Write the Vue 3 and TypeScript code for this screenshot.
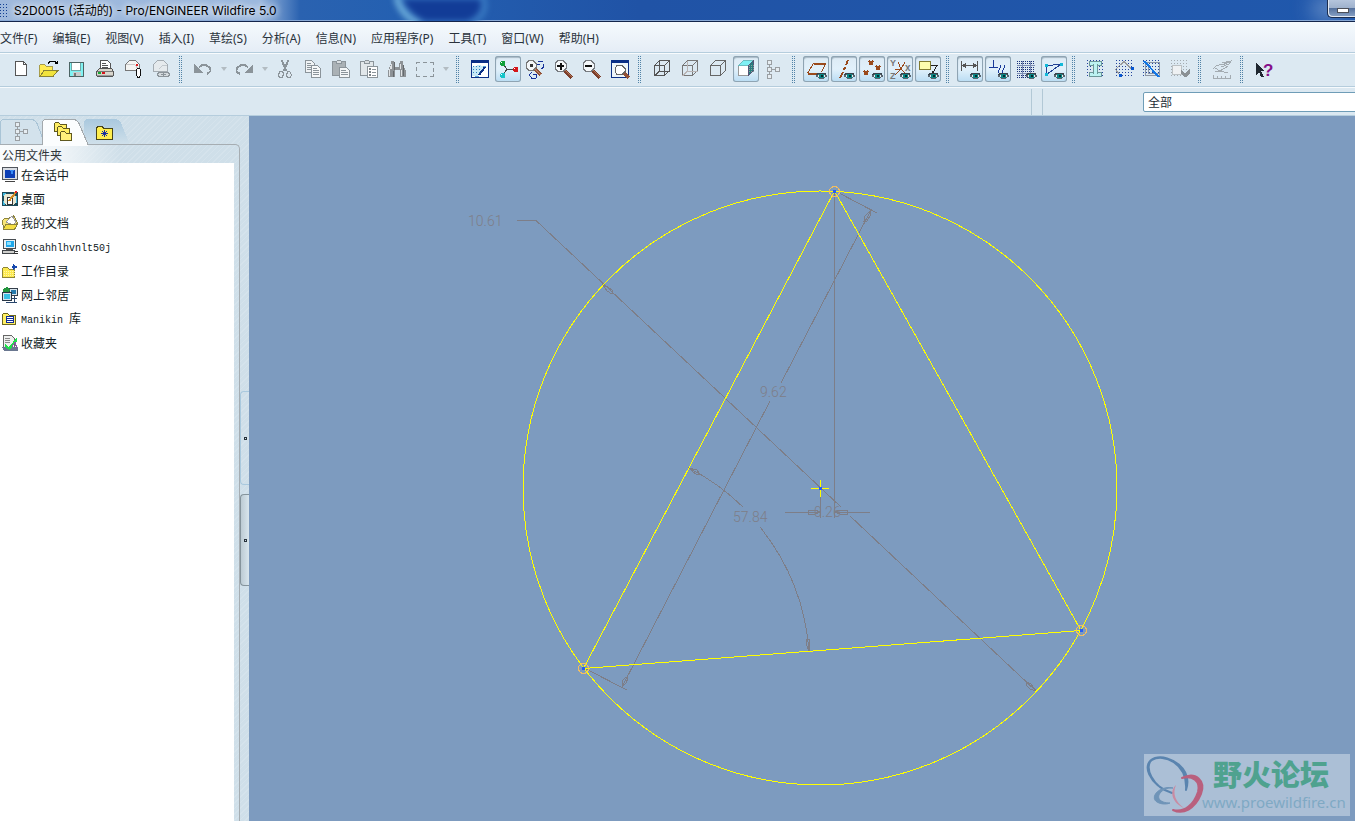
<script setup lang="ts">
import { ref } from 'vue'

interface Shape { d: string; f: string; s: string; w: number }
interface Glyph { x: number; y: number; t: string; c: string; size: number }
interface Tool { id: string; label: string; pressed?: boolean; caret?: boolean }

const p = (d: string, f = 'none', s = 'none', w = 1): Shape => ({ d, f, s, w })

const eye: Shape[] = [
  p('M10.500 17l3-2h5l2 2-3 2h-4z', '#e8f0f0', '#5a656e'),
  p('M13 15h5v4h-5z', '#0a8584'),
  p('M15 16h2v2h-2z', '#042c30'),
  p('M10.500 15.500l2-1h6l2 1', 'none', '#39434c')
]
const dots = (x: number, y: number, w: number, h: number, c: string, gap = 3): Shape => {
  let d = ''
  for (let j = y; j <= y + h; j += gap) for (let i = x; i <= x + w; i += gap) d += `M${i} ${j}h1v1h-1z`
  return p(d, c)
}
const tree = [p('M3.5 1.5h4v4h-4zM3.5 8.5h4v4h-4zM3.5 15.5h4v4h-4zM11.5 8.5h4v4h-4z', '#e6edf2', '#9a9fa3'), p('M5.5 6v2M5.5 13v2M8 10.5h3', 'none', '#9a9fa3')]
const gray = '#8b949a'
const navy = '#0b2f86'
const brown = '#9a4a1c'
const cube = 'M2.5 6.5h10v10h-10zM2.5 6.5l5-5h10l-5 5M17.5 1.5v10l-5 5'
const lens = (mark: string): Shape[] => [
  p('M10 11l8 8', 'none', '#7c3f2c', 3),
  p('M11 11l7 7', 'none', '#b57655', 1),
  p('M4 1.5h5l3 3v5l-3 3H4l-3-3v-5z', '#f5f8fa', '#777b80'),
  p(mark, 'none', '#111', 2)
]

const icons: Record<string, Shape[]> = {
  new: [p('M4.5 2.5h8l3 3v11h-11z', '#fff', '#555'), p('M12.5 2.5v3h3', 'none', '#555')],
  open: [
    p('M.5 17.5v-11l1-1h4l2 2h6v3', '#ffeb52', '#a89d4a'),
    p('M1 17.5l4-6h14l-5 6z', '#f1e33c', '#8a8334'),
    p('M9.5 5v-1l2-2h4l2 2', 'none', '#000'), p('M15 5h4v-4z', '#000')
  ],
  save: [p('M2.5 3.5h14v14h-14z', '#80f3f3', '#4c6464'), p('M5 4h8v7H5z', '#fff'), p('M4.5 4v7h9V4', 'none', '#70a7a7'), p('M6 13h8v4H6z', '#c8cccc'), p('M7 14h2v3H7z', '#777')],
  print: [
    p('M5.5 9.5v-8h7l3 3v6h-10z', '#fff', '#555'), p('M7 4.5h4M7 6.5h6M7 8.5h6', 'none', '#555'),
    p('M1.5 12.5l3-3h12l2 3v4l-1 1h-15l-1-1z', '#d8d5cc', '#555'), p('M2 12.5h16', 'none', '#777'),
    p('M2 16h16v1H2z', '#999'), p('M3 13h3v2H3z', '#14a832'), p('M7 13h3v2H7z', '#d4161b')
  ],
  mail: [
    p('M2.5 11.5v-6l4-4h6l4 4v6z', '#f4f4f2', '#777'), p('M2.5 5.5h9l5 6', 'none', '#c7c7c7'), p('M13 5h2v2h-2z', '#e01b1b'),
    p('M13.5 15v-4l1-2h2l1 2v5l-1 2h-2l-1-2v-5', '#fff', '#111')
  ],
  maillink: [
    p('M2.5 12.5v-7l4-4h6l4 4v7z', '#e5eaed', '#a4acb2'), p('M7.5 10.5l4-4h4', 'none', '#c2c9ce'),
    p('M7.5 13.5h5v4h-5l-1-2zM12.5 13.5h5l1 2-1 2h-5zM10 15.5h5', '#d4dade', '#8b949a')
  ],
  undo: [p('M1 5v9h9z', gray), p('M6 8q5-4 10 0q4 4-2 7', 'none', gray, 2)],
  redo: [p('M19 5v9h-9z', gray), p('M14 8Q9 4 4 8q-4 4 2 7', 'none', gray, 2)],
  cut: [
    p('M6.5 1l5 11M13.5 1l-5 11', 'none', gray, 2), p('M4.5 12.5h3l1 2-1 4h-3l-1-2zM12.5 12.5h2l2 3-1 3h-3l-1-2z', '#dce7ef', gray)
  ],
  copy: [
    p('M2.5 1.5h6l3 3v9h-9z', '#f0f3f5', gray), p('M4 4.5h4M4 6.5h5M4 8.5h5M4 10.5h5', 'none', gray),
    p('M8.5 6.5h6l3 3v9h-9z', '#f6f8f9', gray), p('M10 9.5h4M10 11.5h6M10 13.5h6M10 15.5h6', 'none', gray)
  ],
  paste: [
    p('M1.5 2.5h13v14h-13z', '#aab1b5', gray), p('M5.5 4.5v-2l1-1h3l1 1v2z', '#d8dde0', gray),
    p('M8.5 8.5h7l3 3v7h-10z', '#f3f6f7', gray), p('M10 11.5h5M10 13.5h7M10 15.5h7', 'none', gray)
  ],
  pastesp: [
    p('M1.5 2.5h13v14h-13z', '#e1e7ea', gray), p('M5.5 4.5v-2l1-1h3l1 1v2z', '#d8dde0', gray),
    p('M8.5 7.5h10v11h-10z', '#fff', gray), p('M10 9h2v2h-2zM10 12h2v2h-2zM10 15h2v2h-2z', '#7b8388'), p('M13 10.5h4M13 13.5h4M13 16.5h4', 'none', gray)
  ],
  find: [
    p('M4 2h3v2h1v4h4v-4h1V2h3v3l3 7v6h-6v-7h-5v7H1v-6l3-7z', '#8d9296'), p('M4 5h1v5H3v7H2v-5zM13 5h1v6h1v6h-1v-7h-1z', '#e0e3e5'), p('M7 3v8M16 6v11M6 12v6', 'none', '#666a6d')
  ],
  select: [p('M1.5 5V3.5H5M8 3.5h4M15 3.5h3.500V6M18.500 9v4M18.500 15v2.500H15M12 17.500H8M5 17.500H1.500V15M1.500 12V8', 'none', gray)],
  sketchview: [
    p('M1.5 2.500h17v16h-17z', '#fff', navy), p('M1 1h18v3H1z', navy), p('M2 8l7-2 6 2-7 9H2z', '#c6e7f5'),
    dots(3, 7, 8, 8, '#2d83c0'), p('M9 16l6-8', 'none', navy, 2), p('M5 17h4M13 7l3 1', 'none', '#58a5d4')
  ],
  datum: [
    p('M5 5l4 5h8M9 10l-4 6', 'none', '#444'), p('M3 2h3l1 1v3l-1 1H3L2 6V3z', '#11a03a'), p('M16 8h3l1 1v3l-1 1h-3l-1-1V9z', '#d4161b'), p('M3 14h3l1 1v3l-1 1H3l-1-1v-3z', '#14c4c9'),
    p('M3 3h1v1H3zM16 9h1v1h-1zM3 15h1v1H3z', '#fff')
  ],
  refit: [
    p('M8 9l7 7', 'none', '#925238', 3), p('M9 10l6 6', 'none', '#c08a6c'), p('M3 1.500h4l3 3v4l-3 3H3l-3-3v-4z', '#f3f6f8', '#777'), p('M4 5h3v3H4z', '#333'),
    p('M12 2.500h5M11 5.500h3M17.500 5v3l-2 2M5.500 13l-2 3 2 3h4M7 15.500h3v3', 'none', '#16319a')
  ],
  zoomin: lens('M3 7h7M6.500 4v7'),
  zoomout: lens('M3 7h7'),
  zoomfit: [
    p('M1.500 2.500h17v16h-17z', '#eef5f9', navy), p('M1 1h18v3H1z', navy), p('M13 13l6 6', 'none', '#925238', 3),
    p('M7 6.500h5l3 3v3l-3 3H7l-2-3v-3z', '#fff', '#666')
  ],
  wire: [p(cube, 'none', '#555'), p('M7.500 2v10h10M7.500 12l-5 5', 'none', '#555')],
  hidden: [p(cube, 'none', '#777'), p('M7.500 2v10h10M7.500 12l-5 5', 'none', '#b9b4b4')],
  nohidden: [p(cube, 'none', '#666')],
  shaded: [
    p('M2.500 6.500h10v10h-10z', '#fff', '#999'), p('M2.500 6.500l5-5h10l-5 5z', '#7ef0f4', '#6bbcc0'), p('M12.500 6.500l5-5v10l-5 5z', '#277e7f', '#557'), dots(13, 6, 4, 6, '#8b9a9a', 2)
  ],
  tree,
  plane: [p('M1.500 14.500l6-10h12l-4 9M1.500 14.500h9', 'none', brown, 1), p('M2 15.500h8M8 5.500h11', 'none', brown), ...eye],
  axis: [p('M14 1l-2 5M11 8l-1 3M9 13l-3 6', 'none', brown, 2), ...eye],
  points: [p('M7 2l4 4M11 2l-4 4M2 12l4 4M6 12l-4 4M14 7l4 4M18 7l-4 4', 'none', brown, 2), ...eye],
  csys: [p('M8 3l3 7-6 6M11 10h-6M11 10l4-7M11 10l5 5', 'none', brown), ...eye],
  note: [p('M1.500 2.500h11v8h-11z', '#fdfcae', '#817b31'), p('M13 6.500h6l-5 9M14 12v3h3', 'none', '#222'), ...eye],
  dims: [p('M1.500 2v10M17.500 2v10M2 6.500h15', 'none', '#555'), p('M2 6.500l4-3v6zM17 6.500l-4-3v6z', '#555'), ...eye],
  constr: [p('M5.500 1v8M1 8.500h9M10 14l3-8M14 14l3-8', 'none', '#193a9a'), ...eye],
  grid: [dots(1, 2, 17, 17, '#193078', 2), p('M6.500 2v17M14.500 2v17M1 6.500h18M1 14.500h18', 'none', '#7d8db4'), ...eye],
  vertices: [p('M2.500 6.500l14-1-14 10z', 'none', '#214294'), p('M1 5h3v3H1zM16 4h3v3h-3zM1 14h3v3H1z', '#13b9d8'), ...eye],
  shade: [dots(1, 1, 17, 17, '#24449c'), p('M3.500 2.500h12v4h-3l-1-1v9l1-1h3v4h-12v-4h3l1 1v-9l-1 1h-3z', '#bdf2f2', '#6d9799')],
  openends: [dots(2, 1, 16, 17, '#24449c'), p('M6 16L1.500 10.500 10 2.500l8 8', 'none', '#999'), p('M5 15h3v3H5zM17 8h3v3h-3z', '#0757d0')],
  overlap: [dots(1, 1, 17, 17, '#24449c'), p('M3.500 3.500h14v13M6.500 5v9.500H18M3.500 3.500v13h14', 'none', '#8d96a4'), p('M2 2l15 16', 'none', '#1477e5', 2)],
  req: [dots(1, 1, 17, 17, '#a3abb0'), p('M2.500 6.500h9v9h-9z', '#eef1f3', '#bbc1c4'), p('M11 11l4 4 5-6v5l-4 4h-2l-3-4z', '#8b9195')],
  analyze: [p('M1.500 10q2-5 9-4l8-4M3 9l5 3 8-5M3 13q7-1 13 1M10 4l9-2-2 3-8 3', 'none', '#a3abb1'), p('M1.500 16v3.500h17V16M5.500 17v3M9.500 17v3M13.500 17v3', 'none', '#a3abb1')],
  help: [p('M2 4l8 8H7l3 6H7l-2-5-3 3z', '#202831')],
  session: [p('M.5.5h15v12H.500z', '#d9dde3', '#50555c'), p('M3 2.500h10v8H3z', '#0c3fb6'), p('M8 3h4l-2 5z', '#398cf4'), p('M3 14h10v1H3z', '#444')],
  desktop: [p('M0 1h16v14H0z', '#1d4a58'), p('M1 2h3v3H1zM1 10h2v4H1zM13 5h2v7h-2z', '#43b8de'), p('M3 3h9l2 3v6l-3 2H4l-2-2V6z', '#e7e7d2'), p('M5.500 6v7h5V6z', '#fff', '#333'), p('M7 10l7-9', 'none', '#d08a22', 2), p('M13 0h2v2h-2z', '#e32222')],
  docs: [p('M1.500 14.500l-1-9 2-2h4l5-3 4 7-3 6z', '#f8e678', '#8d843c'), p('M4 7l6-6 4 6-3 3z', '#fff', '#999'), p('M1.500 14.500l2-5h12l-3 5z', '#f4de43', '#8d843c')],
  computer: [p('M1.500.5h12v9h-12z', '#e9f0f4', '#474d52'), p('M4 2h8v6H4z', '#20a8eb'), p('M5 3h4v3H5z', '#8be1ff'), p('M4 10h7v1H4z', '#555'), p('M.5 11.500h12v3H.5z', '#cfcfcc', '#404448'), p('M11 14.500h5M13 12.500h3', 'none', '#333')],
  work: [p('M.5 14.500v-9l1-1h4l2 2h5v8z', '#fce94f', '#8d8538'), dots(2, 8, 10, 5, '#fff6a8', 2), p('M12 0l1 3 3 1-3 1-1 3-1-3-3-1 3-1z', '#1648ae')],
  network: [p('M7.500 1.500h8v7h-8z', '#d9e6ee', '#353f4b'), p('M1 2l4-2 3 3-2 2H1z', '#23953e'), p('M9 3h5v4H9z', '#267bae'), p('M.5 5.500h9v8h-9z', '#d7e5ed', '#293746'), p('M2 7h6v5H2z', '#39c1e4'), p('M10 11.500h5M4 15.500h11M12.500 9v6', 'none', '#28456b')],
  library: [p('M.5 13.500v-10l1-1h4l2 2h6v9z', '#fff063', '#6e671e'), p('M4 5h8v7H4z', '#102c96'), p('M5 6.500h6M5 8.500h6M5 10.500h6', 'none', '#fff')],
  favs: [p('M1.500.5h8l3 3v9h-11z', '#eef0ee', '#666'), p('M3 3.500h5M3 5.500h5M3 7.500h5', 'none', '#888'), p('M0 12h16v4H2z', '#6a7790'), p('M3 9l4 3 8-10v4l-7 9-5-3z', '#1ee04a'), p('M10 12l3-5 2 7', 'none', '#8854a4')]
}

const glyphs: Record<string, Glyph[]> = {
  help: [{ x: 9, y: 17, t: '?', c: '#86108a', size: 17 }],
  csys: [{ x: 0, y: 7, t: 'Y', c: '#777', size: 9 }, { x: 0, y: 20, t: 'Z', c: '#777', size: 9 }, { x: 15, y: 12, t: 'x', c: '#777', size: 10 }]
}

const tools: Tool[][] = [
  [
    { id: 'new', label: '新建' }, { id: 'open', label: '打开' }, { id: 'save', label: '保存' },
    { id: 'print', label: '打印' }, { id: 'mail', label: '发送邮件' }, { id: 'maillink', label: '发送链接' }
  ],
  [
    { id: 'undo', label: '撤消', caret: true }, { id: 'redo', label: '重做', caret: true }, { id: 'cut', label: '剪切' },
    { id: 'copy', label: '复制' }, { id: 'paste', label: '粘贴' }, { id: 'pastesp', label: '选择性粘贴' },
    { id: 'find', label: '查找' }, { id: 'select', label: '选取', caret: true }
  ],
  [
    { id: 'sketchview', label: '草绘视图' }, { id: 'datum', label: '旋转中心', pressed: true }, { id: 'refit', label: '定向模式' },
    { id: 'zoomin', label: '放大' }, { id: 'zoomout', label: '缩小' }, { id: 'zoomfit', label: '重新调整' }
  ],
  [
    { id: 'wire', label: '线框' }, { id: 'hidden', label: '隐藏线' }, { id: 'nohidden', label: '消隐' },
    { id: 'shaded', label: '着色', pressed: true }, { id: 'tree', label: '模型树' }
  ],
  [
    { id: 'plane', label: '基准平面', pressed: true }, { id: 'axis', label: '基准轴', pressed: true }, { id: 'points', label: '基准点', pressed: true },
    { id: 'csys', label: '坐标系', pressed: true }, { id: 'note', label: '注释', pressed: true }
  ],
  [
    { id: 'dims', label: '显示尺寸', pressed: true }, { id: 'constr', label: '显示约束', pressed: true },
    { id: 'grid', label: '显示网格' }, { id: 'vertices', label: '显示顶点', pressed: true }
  ],
  [
    { id: 'shade', label: '着色封闭环' }, { id: 'openends', label: '加亮开放端点' }, { id: 'overlap', label: '重叠几何' }, { id: 'req', label: '特征要求' }
  ],
  [{ id: 'analyze', label: '分析' }],
  [{ id: 'help', label: '上下文帮助' }]
]

const menus = ['文件(F)', '编辑(E)', '视图(V)', '插入(I)', '草绘(S)', '分析(A)', '信息(N)', '应用程序(P)', '工具(T)', '窗口(W)', '帮助(H)']

const places = [
  { id: 'session', latin: '', text: '在会话中' },
  { id: 'desktop', latin: '', text: '桌面' },
  { id: 'docs', latin: '', text: '我的文档' },
  { id: 'computer', latin: 'Oscahhlhvnlt50j', text: '' },
  { id: 'work', latin: '', text: '工作目录' },
  { id: 'network', latin: '', text: '网上邻居' },
  { id: 'library', latin: 'Manikin ', text: '库' },
  { id: 'favs', latin: '', text: '收藏夹' }
]

const filter = ref('全部')
const vertices = [[834, 191], [583, 668], [1081, 630]]
const dimTexts = [
  { x: 468, y: 226, t: '10.61' },
  { x: 760, y: 397, t: '9.62' },
  { x: 733, y: 522, t: '57.84' },
  { x: 814, y: 517, t: '0.26' }
]
</script>

<template>
  <div class="app">
    <header class="title">
      <svg class="swirl" viewBox="0 0 120 21" aria-hidden="true">
        <path d="M8-4Q14 14 34 24h44Q100 14 92-4z" fill="#123c97" stroke="#3f83c9" stroke-width="5" />
        <path d="M6-4Q10 16 30 24" fill="none" stroke="#86c6e6" stroke-width="4" />
      </svg>
      <span class="grip"></span>
      <h1>S2D0015 (活动的) - Pro/ENGINEER Wildfire 5.0</h1>
      <button class="min" aria-label="最小化"><span></span></button>
    </header>

    <nav class="menu">
      <button v-for="m in menus" :key="m">{{ m }}</button>
    </nav>

    <div class="tools" role="toolbar" aria-label="工具栏">
      <div v-for="(g, i) in tools" :key="i" class="group">
        <template v-for="t in g" :key="t.id">
          <button class="tool" :class="{ pressed: t.pressed }" :aria-label="t.label" :aria-pressed="!!t.pressed">
            <svg viewBox="0 0 20 20" width="20" height="20">
              <path v-for="(s, k) in icons[t.id]" :key="k" :d="s.d" :fill="s.f" :stroke="s.s" :stroke-width="s.w" />
              <text v-for="l in glyphs[t.id] || []" :key="l.t" :x="l.x" :y="l.y" :fill="l.c" :font-size="l.size">{{ l.t }}</text>
            </svg>
          </button>
          <button v-if="t.caret" class="caret" :aria-label="t.label + '选项'"></button>
        </template>
      </div>
    </div>

    <div class="filterbar">
      <span class="spacer"></span>
      <div class="filter">
        <select v-model="filter" aria-label="过滤器"><option>全部</option><option>几何</option><option>尺寸</option></select>
      </div>
    </div>

    <main class="work">
      <aside class="side">
        <div class="panel">
          <div class="tabs" role="tablist">
            <button role="tab" class="tab first" aria-label="模型树" aria-selected="false">
              <svg viewBox="0 0 44 26" width="44" height="26">
                <path d="M.5 26V4Q.5.5 4 .5h27q4 0 6 4l8 21" fill="#d3e2ec" stroke="#a9c4d6" />
                <g transform="translate(12 2)"><path v-for="(s, k) in tree" :key="k" :d="s.d" :fill="s.f" :stroke="s.s" /></g>
              </svg>
            </button>
            <button role="tab" class="tab active" aria-label="文件夹浏览器" aria-selected="true">
              <svg viewBox="0 0 44 26" width="44" height="26">
                <path d="M.5 27V4Q.5.5 4 .5h27q4 0 6 4l9 21v2z" fill="#fbfdfe" />
                <path d="M.5 26V4Q.5.5 4 .5h27q4 0 6 4l9 21" fill="none" stroke="#a3a9ad" />
                <path d="M12.500 12.500v-8l1-1h3l2 2h6v7z" fill="#ffee62" stroke="#5f5920" />
                <path d="M15.500 16.500v-8l1-1h3l2 2h6v7z" fill="#ffee62" stroke="#5f5920" />
                <path d="M18.500 21.500v-8l1-1h3l2 2h5v7z" fill="#fff07a" stroke="#5f5920" />
              </svg>
            </button>
            <button role="tab" class="tab" aria-label="收藏夹" aria-selected="false">
              <svg viewBox="0 0 44 26" width="44" height="26">
                <path d="M0 26V4Q0 0 4 0h27q4 0 6 4l9 22z" fill="url(#tabFade)" />
                <defs><linearGradient id="tabFade" x2="0" y2="1"><stop stop-color="#a9c8de" /><stop offset="1" stop-color="#d1e1eb" /></linearGradient></defs>
                <path d="M12.500 20.500v-11l1-2h5l1 2h9v11z" fill="#ffee4e" stroke="#494517" />
                <path d="M20.500 11v7M17 14.500h7M18 12l5 5M23 12l-5 5" stroke="#172fa0" />
              </svg>
            </button>
          </div>
          <section class="browser">
            <h2>公用文件夹</h2>
            <ul>
              <li v-for="r in places" :key="r.id">
                <button>
                  <svg viewBox="0 0 16 16" width="16" height="16">
                    <path v-for="(s, k) in icons[r.id]" :key="k" :d="s.d" :fill="s.f" :stroke="s.s" :stroke-width="s.w" />
                  </svg>
                  <span><span v-if="r.latin" class="latin">{{ r.latin }}</span>{{ r.text }}</span>
                </button>
              </li>
            </ul>
          </section>
        </div>
        <div class="sashes">
          <button class="sash light" aria-label="展开导航区"></button>
          <button class="sash" aria-label="收起导航区"></button>
        </div>
      </aside>

      <section class="canvas" aria-label="草绘区">
        <svg class="sketch" viewBox="249 116 1106 705" preserveAspectRatio="xMinYMin meet">
          <g class="dim">
            <path d="M517 220.500h19L841 507M850 516L1036 691" />
            <path d="M839 193l38 20M871 210L781 383M770 401L622 687M584 668l43 22" />
            <path d="M689 468A226 226 0 0 1 743 507M760 527A226 226 0 0 1 809 651" />
            <path d="M834.500 191v327M820.500 488v30M785 512.500h35M835 512.500h35" />
            <path d="M603 285l4 6 5 3 1-3-5-4zM1036 691l-5-7-5-2v3l4 4zM871 210l-6 6-1 5h3l3-5zM622 687v-6l4-4 2 1-2 5zM689 468l8 2 3 4-3 1-5-4zM809 651l-3-7v-5h3l1 5zM820 512l-5-2h-7v4h7zM835 512l5-2h7v4h-7z" />
          </g>
          <g class="geom">
            <circle cx="820" cy="488" r="297" />
            <path d="M834.500 191L583.500 668.500 1081 630.500z" />
            <path d="M811 488.500h18M820.500 480v17" />
          </g>
          <path d="M819 487h3v3h-3z" fill="#2a5cf0" />
          <g v-for="v in vertices" :key="v[0]">
            <circle :cx="v[0] + .5" :cy="v[1] + .5" r="5" fill="none" stroke="#f0bd62" />
            <rect :x="v[0] - 1" :y="v[1] - 1" width="3" height="3" fill="#2a5cf0" />
          </g>
          <text v-for="t in dimTexts" :key="t.t" :x="t.x" :y="t.y">{{ t.t }}</text>
        </svg>

        <div class="mark">
          <svg viewBox="0 0 58 62" width="58" height="62" aria-hidden="true">
            <path d="M42 36C49 15 26 0 11 4C-4 9 5 31 28 39C9 34-1 12 8 6C19-1 44 9 42 36z" fill="#5a84af" stroke="#5a84af" stroke-width="2" stroke-linejoin="round" />
            <path d="M38 24C52 17 62 27 57 40C51 55 39 61 29 56C41 59 50 50 54 38C57 27 48 21 38 24z" fill="#b9607e" stroke="#b9607e" stroke-width="2" stroke-linejoin="round" />
            <path d="M29 34C16 31 5 43 13 48C18 51 24 50 26 49C15 49 12 43 17 38C21 34 25 34 29 34z" fill="#6f94b8" stroke="#6f94b8" />
            <path d="M32 31C25 37 28 49 40 54C32 48 28 40 32 31z" fill="#c98ba2" />
          </svg>
          <div class="words"><strong>野火论坛</strong><span>www.proewildfire.cn</span></div>
        </div>
      </section>
    </main>
  </div>
</template>

<style>
html, body { margin: 0; }
</style>

<style scoped>
* { box-sizing: border-box; }
.app {
  display: flex;
  flex-direction: column;
  height: 100vh;
  overflow: hidden;
  background: #dbe8f1;
  color: #18242e;
  font: 12px/16px "Noto Sans", "Noto Sans CJK SC", sans-serif;
}
button {
  margin: 0;
  padding: 0;
  border: 0;
  background: none;
  color: inherit;
  font: inherit;
}
svg { display: block; overflow: visible; shape-rendering: crispEdges; }

.title {
  position: relative;
  display: flex;
  align-items: center;
  flex: none;
  height: 22px;
  overflow: hidden;
  border-bottom: 1px solid #14264c;
  box-shadow: inset 0 -1px #8aaad6;
  background: linear-gradient(90deg, #9fb9dc 0, #9bb8de 260px, #2a62b0 300px, #2460b1 400px, #2053a6 640px, #2058ac 100%);
}
.swirl { position: absolute; left: 390px; top: 0; width: 120px; height: 21px; filter: blur(3px); shape-rendering: auto; }
.grip {
  width: 8px;
  height: 14px;
  margin: 0 6px 0 0;
  background: conic-gradient(from 0deg at 1px 1px, transparent 75%, #123f92 0) 0 0 / 3px 3px;
}
h1 {
  margin: 0;
  color: #000;
  font: 12px/16px Inter, "Noto Sans CJK SC", sans-serif;
  white-space: nowrap;
  text-shadow: 0 0 6px #fff, 0 0 8px #fff;
}
.min {
  display: flex;
  align-items: flex-end;
  width: 28px;
  height: 18px;
  margin-left: auto;
  align-self: flex-start;
  padding: 0 0 4px 9px;
  border: solid #1a2c4e;
  border-width: 0 0 1px 1px;
  border-radius: 0 0 0 5px;
  background: linear-gradient(#b5c5dc 0, #9fb2cd 45%, #56729e 50%, #8ba4c7);
  box-shadow: inset 1px -1px #e1e8f1, -14px 0 20px #7296ca;
}
.min span { width: 12px; height: 5px; border: 1px solid #4c4f58; background: #fff; }

.menu {
  display: flex;
  flex: none;
  gap: 15px;
  height: 31px;
  padding-top: 4px;
  border-bottom: 1px solid #b5cddd;
  background: linear-gradient(#f5fafd, #e5edf6);
  color: #2a333c;
  white-space: nowrap;
}
.tools {
  display: flex;
  flex: none;
  height: 34px;
  padding: 2px 0 0 7px;
  border-top: 1px solid #f8fbfd;
  border-bottom: 1px solid #b5cddd;
  background: #dce9f2;
}
.group { display: flex; flex: none; align-items: flex-start; }
.group + .group::before {
  content: "";
  width: 3px;
  height: 27px;
  margin: 0 7px 0 4px;
  background: conic-gradient(from 0deg at 1px 1px, transparent 75%, #5183a7 0) 0 0 / 2px 2px;
}
.tool {
  display: grid;
  place-items: center;
  width: 26px;
  height: 26px;
  margin: 0 1px;
  border-radius: 3px;
}
.tool.pressed {
  background: linear-gradient(#dceaf4, #e2f1fb 50%, #b9dcf3);
  box-shadow: 0 0 0 1px #8fa4b3 inset, inset 1px 2px 1px #a9bac6;
}
.tool text { font-family: "Liberation Sans", sans-serif; font-weight: 700; }
.caret { width: 13px; height: 26px; }
.caret::before {
  content: "";
  display: block;
  width: 0;
  margin: 0 auto;
  border: 3px solid transparent;
  border-top: 4px solid #b3bcc2;
  border-bottom: 0;
}

.filterbar {
  display: flex;
  flex: none;
  height: 29px;
  padding-top: 4px;
  border-top: 1px solid #f6fafd;
  border-bottom: 1px solid #b5cddd;
}
.spacer {
  flex: 1;
  max-width: calc(100% - 312px);
  margin: -3px 0 0;
  border-right: 1px solid #b2c8d6;
  box-shadow: inset -10px 0 #dbe8f1, inset -11px 0 #b2c8d6;
}
.filter { width: 312px; padding-left: 100px; }
.filter select {
  width: calc(100% + 24px);
  height: 20px;
  padding: 0 4px;
  border: 1px solid #6f9db7;
  border-radius: 2px;
  appearance: none;
  background: #fff;
  color: #222c35;
  font: 12px/18px "Noto Sans CJK SC", sans-serif;
}

.work { display: flex; flex: 1; min-height: 0; }
.side {
  display: flex;
  flex: none;
  width: 249px;
  padding-top: 3px;
  background: repeating-linear-gradient(135deg, #cfdfe9 0 3px, #d5e3ec 3px 4px);
}
.panel { display: flex; flex-direction: column; flex: 1; }
.tabs { display: flex; height: 25px; }
.tab { width: 42px; height: 25px; }
.tab.active { position: relative; z-index: 1; }
.browser {
  display: flex;
  flex-direction: column;
  flex: 1;
  padding-right: 5px;
  border: 1px solid #a6adb2;
  border-left: 0;
  border-bottom: 0;
  border-top-right-radius: 5px;
}
h2 {
  margin: 0;
  height: 18px;
  padding: 1px 2px;
  background: linear-gradient(90deg, #fafcfd 0, #f0f5f8 60px, transparent 120px);
  color: #30363b;
  font: 12px/18px "Noto Sans CJK SC", sans-serif;
}
ul { flex: 1; margin: 0; padding: 0; background: #fff; list-style: none; }
li button {
  display: flex;
  align-items: center;
  gap: 3px;
  width: 100%;
  height: 24px;
  padding-left: 2px;
  color: #101b23;
  font: 12px/24px "Noto Sans CJK SC", sans-serif;
  text-align: left;
}
.latin { font: 10px/24px "Liberation Mono", monospace; white-space: pre; }
.sashes { display: flex; flex-direction: column; gap: 9px; width: 9px; padding-top: 272px; }
.sash {
  display: grid;
  place-items: center;
  height: 92px;
  border: 1px solid #85949c;
  border-right: 0;
  border-radius: 4px 0 0 4px;
  background: linear-gradient(90deg, #bccbd4, #d9e6ed);
}
.sash.light { height: 94px; border-color: #a9c9de; background: none; }
.sash::before { content: ""; width: 1px; height: 1px; border: 1px solid #26323b; }

.canvas { position: relative; flex: 1; min-width: 0; overflow: hidden; background: #7d9bbf; }
.sketch { width: 100%; height: 100%; }
.sketch text { fill: #7d7e88; font: 300 14px Roboto, sans-serif; }
.dim path { fill: none; stroke: #7d7e88; }
.geom circle, .geom path { fill: none; stroke: #ff0; }
.mark {
  position: absolute;
  right: 5px;
  bottom: 5px;
  display: flex;
  width: 206px;
  height: 62px;
  background: #abbfd6;
}
.mark svg { shape-rendering: auto; }
.words { display: flex; flex-direction: column; padding-top: 2px; white-space: nowrap; }
.words strong { padding-left: 11px; color: #4fa28f; font: 900 29px/34px "Noto Sans CJK SC", sans-serif; }
.words span { color: #7fa9c4; font: 15px/24px "Noto Sans", sans-serif; }
</style>
